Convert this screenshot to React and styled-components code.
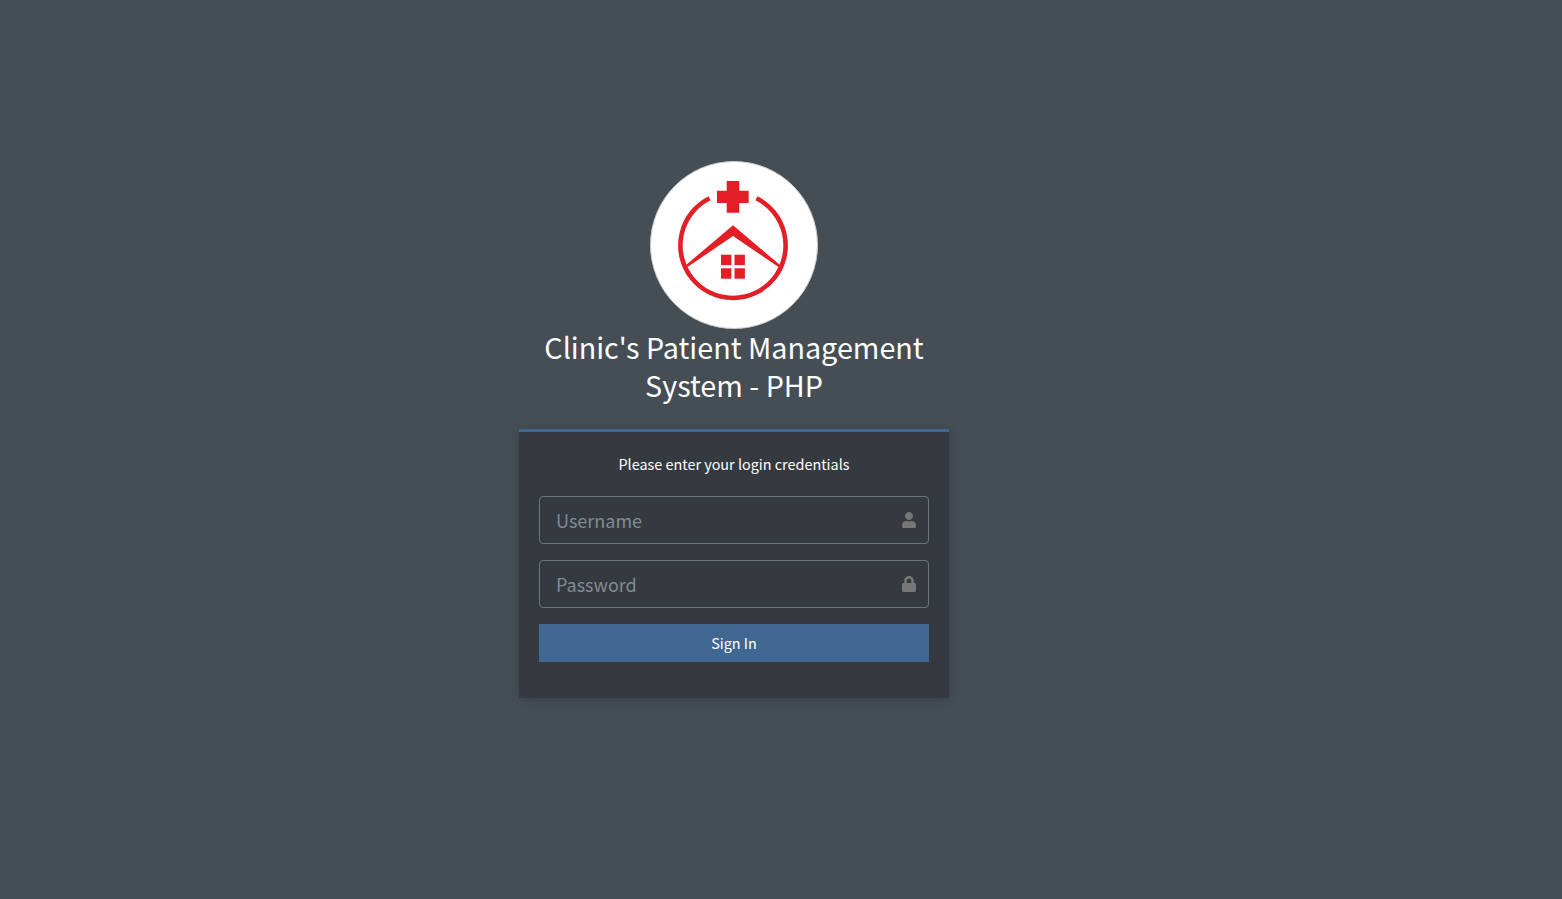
import React from 'react'
import styled, { createGlobalStyle } from 'styled-components'
import { FaUser, FaLock } from 'react-icons/fa'

const GlobalStyle = createGlobalStyle`
html, body { margin: 0; height: 100%; }
body { background: #454d55; font-family: "Noto Sans CJK SC", "Source Sans Pro", "Noto Sans", sans-serif; }
#root { height: 100%; }
* { box-sizing: border-box; }
`
const Page = styled.div`
height: 899px; display: flex; flex-direction: column; align-items: center; justify-content: flex-start;
padding: 161px 94px 0 0; overflow: hidden;`
const LogoWrap = styled.div`
width: 168px; height: 168px; border-radius: 50%; background: #fff; border: 1px solid #c9c9c9; overflow: hidden;
svg { display: block; width: 166px; height: 166px; }`
const Title = styled.h1`
width: 430px; margin: -1px 0 0; padding: 0 0 25px; text-align: center; color: #fff; font-size: 28.72px; font-weight: 400; line-height: 38px;`
const Card = styled.div`
width: 430px; height: 269px; padding: 20px; background: #343a40; border-top: 3px solid #3f6791;
box-shadow: 0 2px 10px rgba(0,0,0,.16);`
const Message = styled.p`
margin: 0 0 20px; height: 24px; text-align: center; color: #fff; font-size: 14.4px; line-height: 24px;`
const Field = styled.div`
position: relative; height: 48px; margin-bottom: 16px;`
const Input = styled.input`
display: block; width: 100%; height: 48px; padding: 0 40px 1px 16px; background: #343a40; color: #fff;
border: 1px solid #6c757d; border-radius: 4px; font: inherit; font-size: 18px; outline: none;
&::placeholder { color: #838a91; opacity: 1; }`
const FieldIcon = styled.span`
position: absolute; top: 16px; right: 12px; display: flex; color: #777; font-size: 16px;`
const Button = styled.button`
display: block; width: 100%; height: 38px; padding: 0; background: #3f6791; color: #fff; border: none;
font: inherit; font-size: 14.4px; line-height: 38px;`

const Logo = () => (
  <svg viewBox="0 0 166 166" xmlns="http://www.w3.org/2000/svg">
    <g fill="#e21f26" transform="translate(-1 -1)">
      <path d="M76.7 20h12.6v9.7h9.4V42h-9.4v9.7H76.7V42H67V29.7h9.7z" />
      <path d="M59.6 37.3 A52.6 52.6 0 1 0 106.4 37.3" fill="none" stroke="#e21f26" strokeWidth="4.6" />
      <path d="M83 64.3 L130 104 L128.5 106 L83 75 L37.5 106 L36 104 Z" />
      <rect x="71" y="93.7" width="10.4" height="10.4" />
      <rect x="84.5" y="93.7" width="10.4" height="10.4" />
      <rect x="71" y="107.3" width="10.4" height="10.4" />
      <rect x="84.5" y="107.3" width="10.4" height="10.4" />
    </g>
  </svg>
)

const App = () => {
  return (
    <>
      <GlobalStyle />
      <Page>
        <LogoWrap><Logo /></LogoWrap>
        <Title>Clinic's Patient Management System - PHP</Title>
        <Card>
          <Message>Please enter your login credentials</Message>
          <Field>
            <Input type="text" placeholder="Username" />
            <FieldIcon><FaUser /></FieldIcon>
          </Field>
          <Field>
            <Input type="password" placeholder="Password" />
            <FieldIcon><FaLock /></FieldIcon>
          </Field>
          <Button>Sign In</Button>
        </Card>
      </Page>
    </>
  )
}

export default App
